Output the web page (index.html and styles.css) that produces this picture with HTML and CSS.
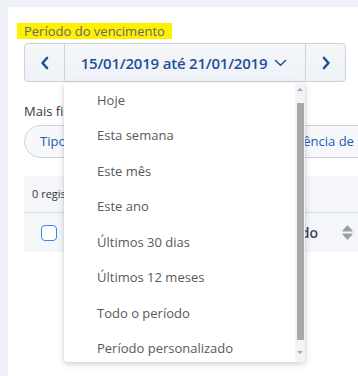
FILE: index.html
```html
<!DOCTYPE html>
<html lang="pt">
<head>
<meta charset="utf-8">
<link rel="stylesheet" href="styles.css">
</head>
<body>
<div class="card">
  <div class="label">Período do vencimento</div>
  <div class="picker">
    <div class="datebar">
      <button class="nav">
        <svg width="10" height="14" viewBox="0 0 10 14"><path d="M7 2 L2.5 7 L7 12" fill="none" stroke="#1f4e99" stroke-width="2.6" stroke-linecap="round" stroke-linejoin="round"/></svg>
      </button>
      <button class="range">
        <span>15/01/2019 até 21/01/2019</span>
        <svg width="13" height="8" viewBox="0 0 13 8"><path d="M1.5 1.5 L6.5 6.2 L11.5 1.5" fill="none" stroke="#1f4e99" stroke-width="1.5" stroke-linecap="round" stroke-linejoin="round"/></svg>
      </button>
      <button class="nav nav-right">
        <svg width="10" height="14" viewBox="0 0 10 14"><path d="M3 2 L7.5 7 L3 12" fill="none" stroke="#1f4e99" stroke-width="2.6" stroke-linecap="round" stroke-linejoin="round"/></svg>
      </button>
    </div>
    <div class="menu">
      <ul class="items">
        <li>Hoje</li>
        <li>Esta semana</li>
        <li>Este mês</li>
        <li>Este ano</li>
        <li>Últimos 30 dias</li>
        <li>Últimos 12 meses</li>
        <li>Todo o período</li>
        <li>Período personalizado</li>
      </ul>
      <div class="scroll">
        <div class="arrow up"></div>
        <div class="thumb"></div>
        <div class="arrow down"></div>
      </div>
    </div>
  </div>
  <div class="more">Mais filtros</div>
  <div class="chips">
    <div class="chip chip1">Tipo de documento</div>
    <div class="chip chip2">Frequência de situação</div>
  </div>
  <div class="table">
    <div class="count">0 registros encontrados</div>
    <div class="head">
      <span class="check"></span>
      <span class="col">Recebido</span>
      <svg class="sort" width="11" height="15" viewBox="0 0 11 15"><path d="M5.5 1 L10 6 H1 Z" fill="#9a9ea6" stroke="#9a9ea6" stroke-width="1.2" stroke-linejoin="round"/><path d="M5.5 14 L10 9 H1 Z" fill="#9a9ea6" stroke="#9a9ea6" stroke-width="1.2" stroke-linejoin="round"/></svg>
    </div>
  </div>
</div>
</body>
</html>
```
FILE: styles.css
```css
* { box-sizing: border-box; }
html, body { margin: 0; padding: 0; }
body {
  background: #eef1f6;
  font-family: "Open Sans", "Noto Sans", sans-serif;
  width: 358px;
  height: 376px;
  overflow: hidden;
}
.card {
  margin: 7px 0 0 8px;
  background: #fff;
  padding: 16px 0 0 16px;
  height: 369px;
  overflow: hidden;
}
.label {
  width: max-content;
  background: #fff000;
  margin-left: -7px;
  padding: 0 7px;
  height: 16px;
  line-height: 16px;
  font-size: 13px;
  color: #646a74;
}
.picker {
  position: relative;
  margin-top: 4px;
}
.datebar {
  display: flex;
  width: 322px;
  height: 39px;
  border: 1px solid #cdd3dd;
  border-radius: 4px;
  background: linear-gradient(#f5f7fa, #eef1f6);
  overflow: hidden;
}
.datebar button {
  border: 0;
  background: transparent;
  padding: 0;
  margin: 0;
  display: flex;
  align-items: center;
  justify-content: center;
  font-family: inherit;
}
.nav { width: 40px; height: 100%; border-right: 1px solid #cdd3dd !important; }
.nav-right { border-right: 0 !important; border-left: 1px solid #cdd3dd !important; }
.range {
  flex: 1;
  height: 100%;
  gap: 7px;
  font-size: 15px;
  font-weight: 600;
  color: #1f4e99;
  letter-spacing: -0.2px;
}
.range span { margin-left: -2px; }
.menu {
  position: absolute;
  left: 40px;
  top: 40px;
  width: 241px;
  height: 279px;
  background: #fff;
  border-radius: 0 0 3px 3px;
  box-shadow: 0 2px 6px rgba(30, 40, 60, 0.22), 0 0 1px rgba(30, 40, 60, 0.2);
  display: flex;
  overflow: hidden;
  z-index: 5;
}
.items {
  list-style: none;
  margin: 0;
  padding: 0;
  flex: 1;
}
.items li {
  height: 35.45px;
  line-height: 35.45px;
  padding-left: 33px;
  font-size: 13px;
  color: #58595b;
}
.scroll {
  width: 10px;
  background: #f1f3f7;
  display: flex;
  flex-direction: column;
  align-items: center;
  padding: 4px 0 3px;
}
.arrow {
  width: 0;
  height: 0;
  border-left: 3px solid transparent;
  border-right: 3px solid transparent;
}
.arrow.up { border-bottom: 3px solid #a8a8a8; margin-top: 1px; }
.arrow.down { border-top: 3px solid #a8a8a8; margin-top: auto; margin-bottom: 5px; }
.thumb {
  width: 7px;
  height: 237px;
  background: #a7a8ab;
  margin-top: 12px;
}
.more {
  margin-top: 20px;
  height: 18px;
  line-height: 18px;
  font-size: 13px;
  color: #33363b;
}
.chips {
  display: flex;
  gap: 8px;
  margin-top: 5px;
  white-space: nowrap;
}
.chip {
  height: 33px;
  line-height: 31px;
  border: 1px solid #ccd3de;
  border-radius: 17px;
  background: #f6f8fb;
  padding: 0 16px 0 15px;
  font-size: 13px;
  color: #2458b0;
  flex: none;
}
.chip1 { width: 220px; }
.table {
  margin-top: 18px;
  background: #f4f6f9;
  width: 400px;
}
.count {
  height: 37px;
  line-height: 36px;
  padding-left: 8px;
  font-size: 11px;
  color: #33363b;
  border-bottom: 1px solid #d6dce6;
}
.head {
  height: 39px;
  display: flex;
  align-items: center;
  padding-left: 17px;
}
.check {
  width: 16px;
  height: 16px;
  border: 1.5px solid #3a86e6;
  border-radius: 4px;
  background: #fff;
  flex: none;
}
.col {
  font-size: 14px;
  font-weight: 600;
  color: #3a4456;
  margin-left: 158px;
  width: 103px;
  text-align: right;
}
.sort { margin-left: 24px; flex: none; }
```
